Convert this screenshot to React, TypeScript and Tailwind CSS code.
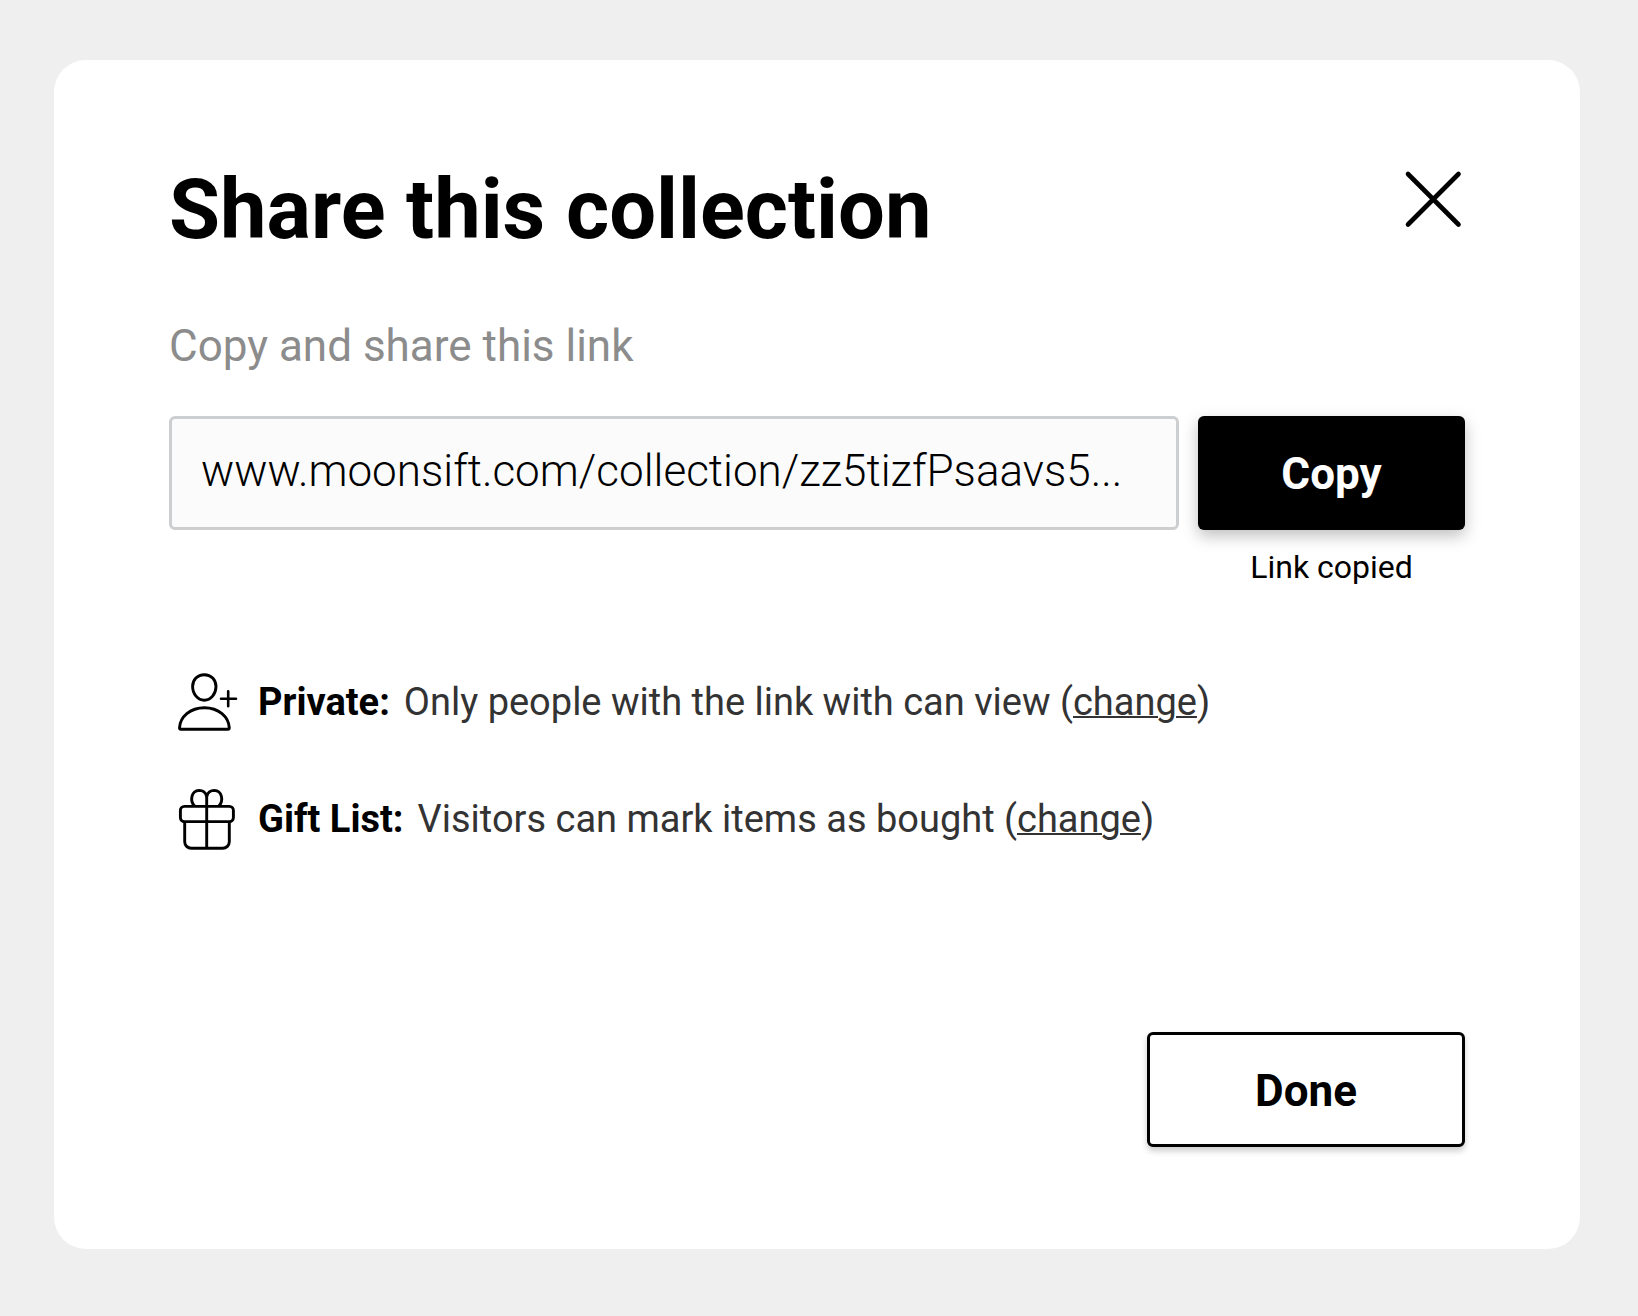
import type { ReactNode } from "react";

const PersonIcon = () => {
    return (
        <svg viewBox="0 0 64 64" className="size-16 shrink-0 text-black" fill="none" stroke="currentColor" strokeWidth="2.9" strokeLinecap="round" strokeLinejoin="round" aria-hidden="true">
            <path d="M29.3 4.7c6.8 0 11.7 5 11.7 11.9 0 7.3-5.2 13.700-11.700 13.700s-11.700-6.400-11.700-13.700c0-6.900 4.900-11.900 11.700-11.900Z" />
            <path d="M5.900 59.300h47c.9 0 1.400-.6 1.400-1.500-.6-11-10.600-20.100-24.900-20.100S5.100 46.800 4.500 57.800c0 .9.5 1.500 1.400 1.500Z" />
            <path d="M53.200 21.300v15M46 28.800h15" strokeWidth="2.600" />
        </svg>
    );
};

const GiftIcon = () => {
    return (
        <svg viewBox="0 0 64 64" className="size-16 shrink-0 text-black" fill="none" stroke="currentColor" strokeWidth="2.9" strokeLinejoin="round" aria-hidden="true">
            <rect x="5.400" y="19.400" width="53" height="15.200" rx="4" />
            <path d="M9.700 34.600v20.200a6.500 6.500 0 0 0 6.500 6.500h31.600a6.500 6.500 0 0 0 6.500-6.500V34.600" />
            <path d="M31.700 8v53.300" />
            <path d="M19.500 19c-5-5.500-3.200-15.200 4.600-15.600 4 0 6.600 2.400 7.600 6 1-3.600 3.600-6 7.600-6 7.800.4 9.600 10.100 4.600 15.600" />
        </svg>
    );
};

type OptionRowProps = {
    icon: ReactNode;
    label: string;
    text: string;
};

const OptionRow = ({ icon, label, text }: OptionRowProps) => {
    return (
        <li className="flex items-center pl-1.5 text-[38px] leading-[64px] text-[#333333]">
            {icon}
            <strong className="ml-[19px] font-bold text-black">{label}</strong>
            <span className="ml-3.5">
                {text} (
                <a href="#" className="underline decoration-2">change</a>)
            </span>
        </li>
    );
};

const App = () => {
    return (
        <div className="min-h-screen bg-[#efefef] pt-[60px] pr-[58px] pb-[67px] pl-[54px] font-['Roboto',sans-serif] text-black">
            <main className="rounded-[32px] bg-white px-[115px] py-[102px]">
                <header className="flex items-start justify-between">
                    <h1 className="text-[83px] leading-[96px] font-bold">Share this collection</h1>
                    <button type="button" aria-label="Close" className="mt-2">
                        <svg viewBox="0 0 64 64" className="size-16" fill="none" stroke="currentColor" strokeWidth="4.600" strokeLinecap="round" aria-hidden="true">
                            <path d="M7 4l50.500 50.500M57.500 4L7 54.500" />
                        </svg>
                    </button>
                </header>

                <label htmlFor="share-link" className="mt-[60px] block text-[44px] leading-[56px] text-[#8c8c8c]">
                    Copy and share this link
                </label>
                <div className="mt-[42px] flex gap-[19px]">
                    <input
                        id="share-link"
                        type="text"
                        readOnly
                        value="www.moonsift.com/collection/zz5tizfPsaavs5..."
                        className="h-[114px] min-w-0 flex-1 rounded-md border-3 border-[#cdced0] bg-[#fbfbfb] px-[29px] pb-1 text-[44px] font-light"
                    />
                    <div className="w-[267px]">
                        <button type="button" className="block h-[114px] w-full rounded-md bg-black pt-0.5 text-[44px] font-bold text-white shadow-[0_6px_16px_rgba(0,0,0,0.25)]">
                            Copy
                        </button>
                        <p role="status" className="mt-[17px] text-center text-[32px] leading-10">Link copied</p>
                    </div>
                </div>

                <ul className="mt-[83px] flex flex-col gap-[53px]">
                    <OptionRow icon={<PersonIcon />} label="Private:" text="Only people with the link with can view" />
                    <OptionRow icon={<GiftIcon />} label="Gift List:" text="Visitors can mark items as bought" />
                </ul>

                <div className="mt-[181px] flex justify-end">
                    <button type="button" className="h-[115px] w-[318px] rounded-md border-3 border-black bg-white pt-0.5 text-[44px] font-bold shadow-[0_4px_6px_rgba(0,0,0,0.2)]">
                        Done
                    </button>
                </div>
            </main>
        </div>
    );
};

export default App;
